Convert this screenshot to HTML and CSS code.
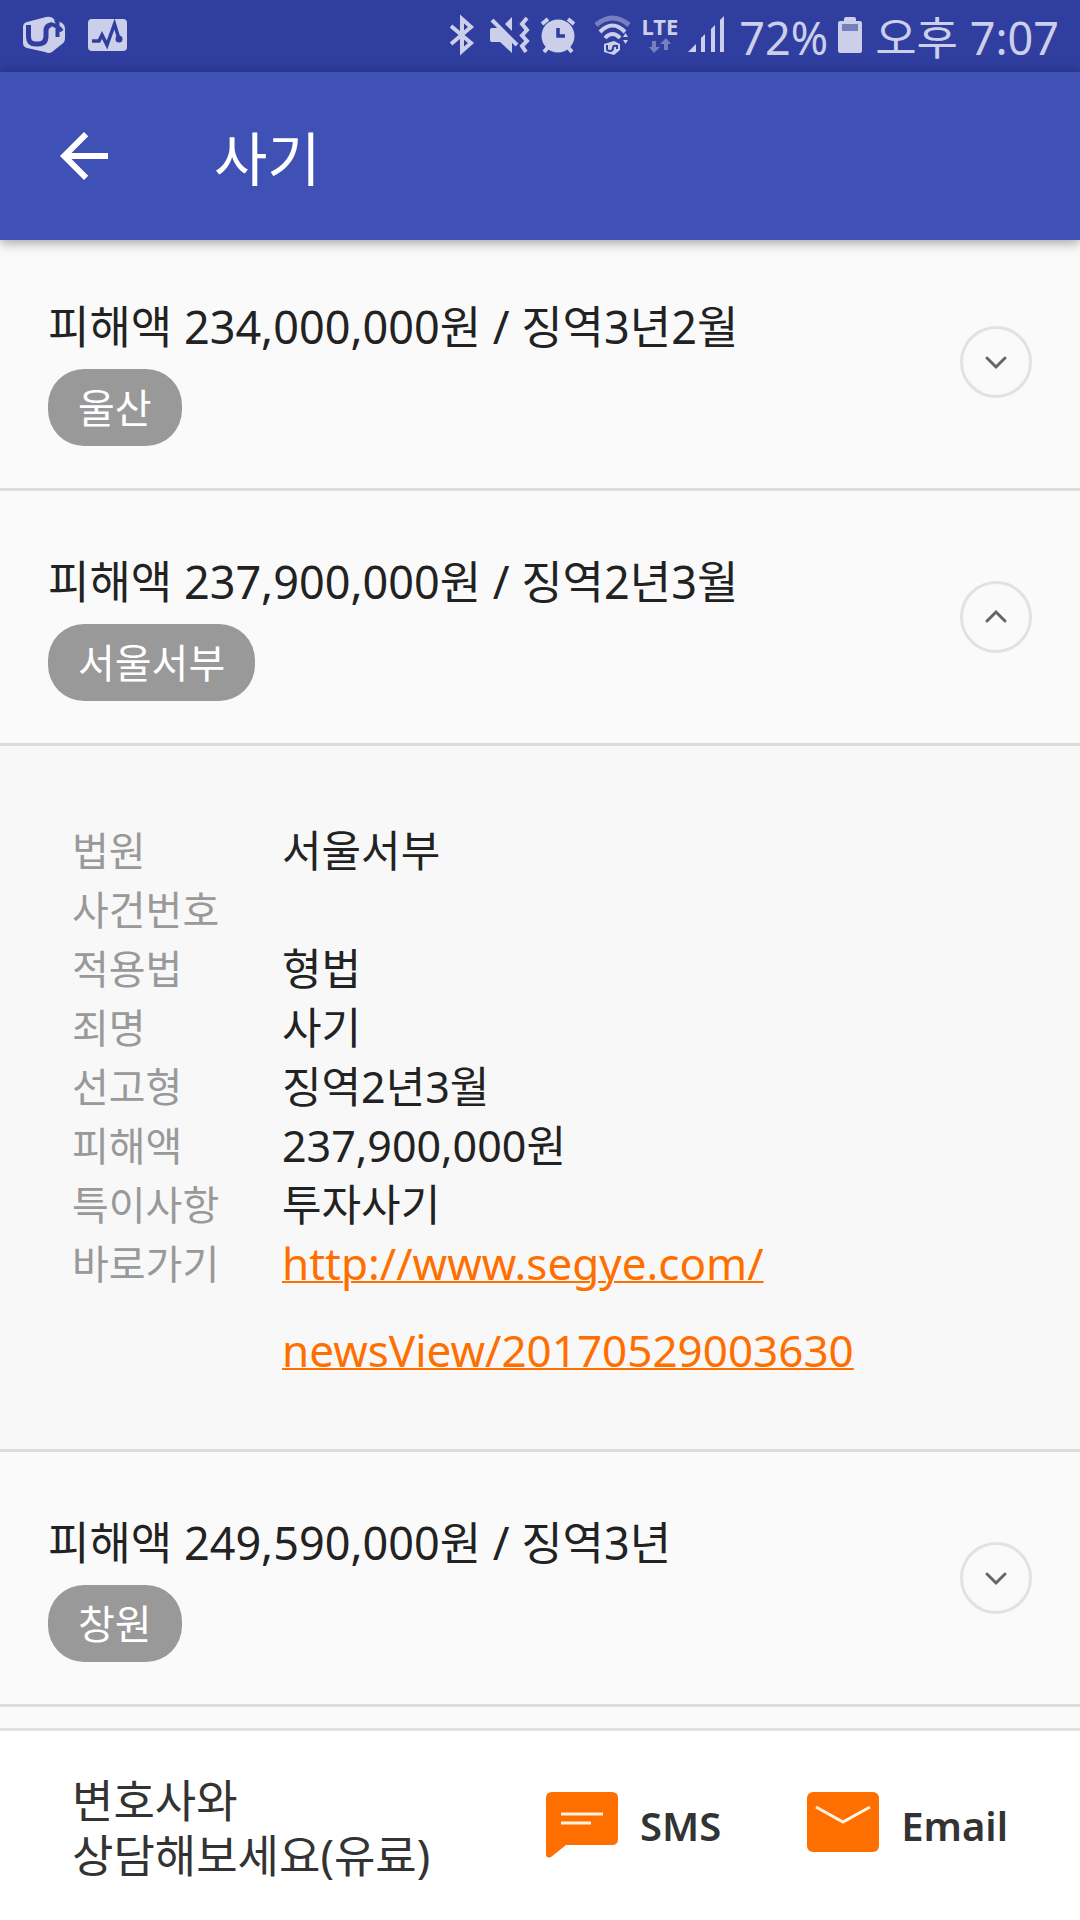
FILE: index.html
```html
<!DOCTYPE html>
<html lang="ko">
<head>
  <meta charset="UTF-8" />
  <meta name="viewport" content="width=device-width, initial-scale=1.0" />
  <title>사기</title>
  <link rel="stylesheet" href="styles.css">
</head>
<body>

<div class="status-bar">
  <div class="status-left">
    <svg width="42" height="72" viewBox="0 0 42 72">
      <path class="fill" d="M0 27 Q0 23 4 22 L23 17 Q28 16 31 19 L32 23 L35 21 L39 23 Q42 25 42 29 V38 Q42 42 39 44 L29 52 Q26 54 22 52 L4 48 Q0 47 0 43Z"/>
      <path class="cut" stroke-width="5" d="M5.500 25 V37 Q5.500 44 13 44 H15 Q23 44 23 36 V31 Q23 25.500 28 25"/>
      <path class="cut" stroke-width="4" d="M27 24 Q34 25 39 31 M34.500 21 V37"/>
    </svg>
    <svg width="39" height="72" viewBox="0 0 39 72">
      <rect class="fill" y="19" width="39" height="32" rx="4"/>
      <path class="cut" stroke-width="3.5" d="M4 41 H11 L14 35 L19 45 L26.500 24 L31 39"/>
      <circle class="dot" cx="31" cy="39" r="3.500"/>
    </svg>
  </div>

  <div class="status-right">
    <svg width="30" height="72" viewBox="0 0 30 72">
      <path class="line" stroke-width="4" d="M1 26 L21 43 L12 51 V19 L21 27 L1 44"/>
    </svg>
    <svg width="40" height="72" viewBox="0 0 40 72">
      <path class="fill" d="M0 30 Q0 28 2 28 H9 L22 41 V53 L10 42 H2 Q0 42 0 40Z M15 24 L22 17 V31Z"/>
      <path class="line" stroke-width="4" d="M2 20 L27 45"/>
      <path class="line" stroke-width="4" d="M37 18 L32 24 L37 30 L32 35.500 L37 41 L32 46 L36 52"/>
    </svg>
    <svg width="44" height="72" viewBox="0 0 44 72">
      <circle class="fill" cx="18" cy="36" r="16.500"/>
      <path class="line" stroke-width="4" d="M2 24 L8 19 M28 19 L34 24 M4 52 L9 46 M27 46 L32 52"/>
      <path class="cut" stroke-width="3.5" d="M18 28 V36 H25"/>
    </svg>
    <svg width="37" height="72" viewBox="0 0 37 72">
      <path class="line faded" stroke-width="5" d="M2 25 Q18.500 11 35 25"/>
      <path class="line" stroke-width="4" d="M6 32 Q18.500 19 31 32 M11 38 Q18.500 30 26 38"/>
      <path class="fill" d="M10 44 L20 41 L26 44 V50 L20 55 L10 52Z M29 37 L31.500 33 L34 37Z M29 40 H34 L31.500 44Z"/>
      <path class="cut" stroke-width="2" d="M13 45 V49 Q13 51 16 51 Q19 51 19 48 Q19 45 23 46 V49"/>
    </svg>
    <div class="network">
      <span>LTE</span>
      <svg width="22" height="16" viewBox="0 0 22 16">
        <path class="fill faded" d="M3 3 H7 V9 H11 L5 15 L0 9 H3Z M15 12 H19 V6 H22 L17 0 L11 6 H15Z"/>
      </svg>
    </div>
    <svg width="41" height="72" viewBox="0 0 41 72">
      <path class="fill" d="M0 52 L8 44 V52Z M13 38 L17 34 V52 H13Z M23 29 L27 25 V52 H23Z M32 20 L36 16 V52 H32Z"/>
    </svg>
    <span class="status-text">72%</span>
    <svg width="27" height="72" viewBox="0 0 27 72">
      <path class="fill" d="M6 21 V19 Q6 17 8 17 H16 Q18 17 18 19 V21 H22 Q24 21 24 23 V51 Q24 53 22 53 H2 Q0 53 0 51 V23 Q0 21 2 21Z"/>
      <rect class="drained" x="4" y="24" width="16" height="7"/>
    </svg>
    <span class="status-text">오후 7:07</span>
  </div>
</div>

<header class="app-bar">
  <button class="back" type="button" aria-label="뒤로">
    <svg width="72" height="72" viewBox="0 0 24 24">
      <path fill="currentColor" d="M20 11H7.830l5.590-5.590L12 4l-8 8 8 8 1.410-1.410L7.830 13H20v-2z"/>
    </svg>
  </button>
  <h1>사기</h1>
</header>

<main class="case-list">
  <section class="case">
    <div class="case-info">
      <h2>피해액 234,000,000원 / 징역3년2월</h2>
      <span class="court">울산</span>
    </div>
    <button class="toggle" type="button" aria-expanded="false" aria-label="펼치기">
      <svg width="24" height="16" viewBox="0 0 24 16"><path d="M3 4 L12 13 L21 4"/></svg>
    </button>
  </section>

  <section class="case">
    <div class="case-info">
      <h2>피해액 237,900,000원 / 징역2년3월</h2>
      <span class="court">서울서부</span>
    </div>
    <button class="toggle" type="button" aria-expanded="true" aria-label="접기">
      <svg width="24" height="16" viewBox="0 0 24 16"><path d="M3 12 L12 3 L21 12"/></svg>
    </button>
  </section>

  <dl class="case-detail">
    <dt>법원</dt><dd>서울서부</dd>
    <dt>사건번호</dt><dd></dd>
    <dt>적용법</dt><dd>형법</dd>
    <dt>죄명</dt><dd>사기</dd>
    <dt>선고형</dt><dd>징역2년3월</dd>
    <dt>피해액</dt><dd>237,900,000원</dd>
    <dt>특이사항</dt><dd>투자사기</dd>
    <dt>바로가기</dt>
    <dd class="article"><a href="http://www.segye.com/newsView/20170529003630">http://www.segye.com/<wbr>newsView/20170529003630</a></dd>
  </dl>

  <section class="case">
    <div class="case-info">
      <h2>피해액 249,590,000원 / 징역3년</h2>
      <span class="court">창원</span>
    </div>
    <button class="toggle" type="button" aria-expanded="false" aria-label="펼치기">
      <svg width="24" height="16" viewBox="0 0 24 16"><path d="M3 4 L12 13 L21 4"/></svg>
    </button>
  </section>
</main>

<footer class="contact">
  <p>변호사와<br>상담해보세요(유료)</p>
  <div class="contact-actions">
    <button type="button">
      <svg width="72" height="66" viewBox="0 0 72 66">
        <path fill="#ff6f00" d="M6 0 H66 Q72 0 72 6 V47 Q72 53 66 53 H20 L5 65 Q0 67 0 62 V6 Q0 0 6 0Z"/>
        <path class="mark" d="M15 22 H57 M15 31 H45"/>
      </svg>
      SMS
    </button>
    <button type="button">
      <svg width="72" height="66" viewBox="0 0 72 66">
        <rect fill="#ff6f00" width="72" height="60" rx="6"/>
        <path class="mark" d="M9 15 L36 30 L63 15"/>
      </svg>
      Email
    </button>
  </div>
</footer>

</body>
</html>
```

FILE: styles.css
```css
html, body {
  margin: 0;
  padding: 0;
}

body {
  font-family: "Noto Sans", "Noto Sans CJK KR", sans-serif;
  background: #fafafa;
  color: #222;
  display: flex;
  flex-direction: column;
  height: 100vh;
  overflow: hidden;
}

h1, h2, p, dl, dd {
  margin: 0;
  font-weight: normal;
}

button {
  font: inherit;
  color: inherit;
  background: none;
  border: none;
  padding: 0;
  cursor: pointer;
}

svg {
  display: block;
  flex: none;
}

/* status bar */
.status-bar {
  display: flex;
  justify-content: space-between;
  flex: none;
  height: 72px;
  padding: 0 21px 0 23px;
  background: #303e9f;
  color: #cbcfe9;
}

.status-left,
.status-right {
  display: flex;
  gap: 10px;
}

.status-left {
  gap: 23px;
}

.status-text {
  font-size: 45px;
  line-height: 76px;
  white-space: nowrap;
}

.network {
  display: flex;
  flex-direction: column;
  align-items: center;
  padding-top: 14px;
  font-size: 22px;
  font-weight: bold;
  line-height: 24px;
}

.fill {
  fill: currentColor;
}

.line {
  fill: none;
  stroke: currentColor;
}

.cut {
  fill: none;
  stroke: #303e9f;
}

.dot {
  fill: #303e9f;
}

.faded {
  opacity: 0.45;
}

.drained {
  fill: #7580bd;
}

/* title bar */
.app-bar {
  position: relative;
  z-index: 1;
  display: flex;
  align-items: center;
  gap: 94px;
  flex: none;
  height: 168px;
  padding: 0 48px;
  box-sizing: border-box;
  background: #3f51b5;
  color: #fff;
  box-shadow: 0 2px 12px rgba(0, 0, 0, 0.4);
}

.app-bar h1 {
  font-size: 58px;
}

/* list */
.case-list {
  flex: 1;
  min-height: 0;
  margin-top: -4px;
}

.case {
  display: flex;
  justify-content: space-between;
  align-items: center;
  padding: 42px 48px;
  border-bottom: 3px solid #dcdcdc;
}

.case-info h2 {
  padding-top: 14px;
  margin-bottom: 7px;
  font-size: 45px;
  line-height: 70px;
}

.court {
  display: inline-block;
  padding: 0 30px;
  border-radius: 36px;
  background: #999;
  color: #fff;
  font-size: 40px;
  line-height: 77px;
  vertical-align: top;
}

.toggle {
  display: flex;
  align-items: center;
  justify-content: center;
  width: 72px;
  height: 72px;
  box-sizing: border-box;
  border: 3px solid #e2e2e2;
  border-radius: 50%;
}

.toggle path {
  fill: none;
  stroke: #666;
  stroke-width: 3;
  stroke-linecap: round;
}

/* opened case */
.case-detail {
  display: grid;
  grid-template-columns: 210px 1fr;
  padding: 75px 72px 55px;
  border-bottom: 3px solid #dcdcdc;
  background: #f8f8f8;
  line-height: 59px;
}

.case-detail dt {
  color: #999;
  font-size: 40px;
}

.case-detail dd {
  font-size: 43px;
}

.case-detail .article {
  margin-top: -14px;
  font-size: 44px;
  line-height: 87px;
}

.article a {
  color: #ff6f00;
  text-decoration-thickness: 2px;
}

/* contact bar */
.contact {
  position: relative;
  display: flex;
  justify-content: space-between;
  align-items: center;
  flex: none;
  padding: 42px 72px 37px;
  border-top: 3px solid #e2e2e2;
  background: #fff;
  color: #333;
}

.contact p {
  font-size: 45px;
  line-height: 55px;
}

.contact-actions {
  display: flex;
  gap: 86px;
  padding-bottom: 6px;
}

.contact-actions button {
  display: flex;
  align-items: center;
  gap: 22px;
  font-size: 40px;
  font-weight: 600;
}

.mark {
  fill: none;
  stroke: #fff3e0;
  stroke-width: 3;
}
```
